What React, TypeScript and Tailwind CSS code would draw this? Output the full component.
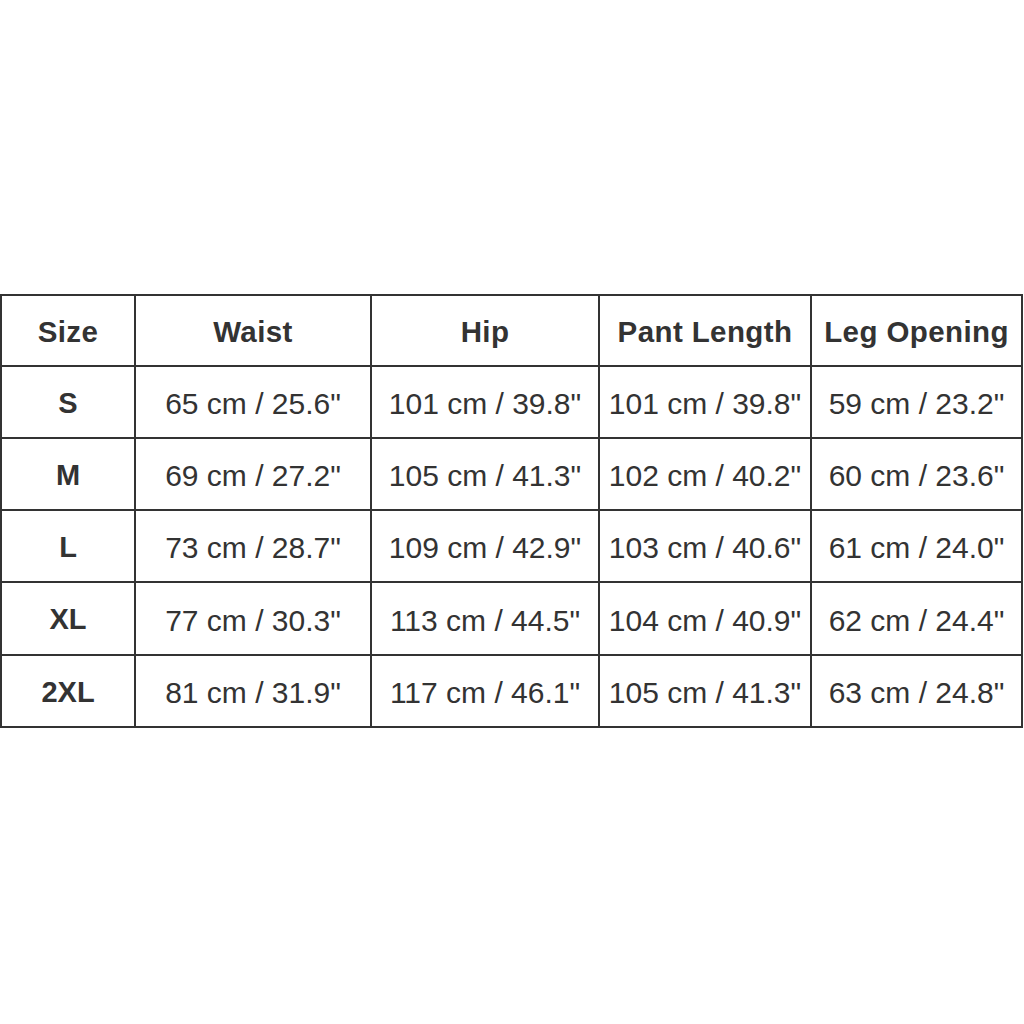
const headers = ['Size', 'Waist', 'Hip', 'Pant Length', 'Leg Opening']

const rows = [
  ['S', '65 cm / 25.6"', '101 cm / 39.8"', '101 cm / 39.8"', '59 cm / 23.2"'],
  ['M', '69 cm / 27.2"', '105 cm / 41.3"', '102 cm / 40.2"', '60 cm / 23.6"'],
  ['L', '73 cm / 28.7"', '109 cm / 42.9"', '103 cm / 40.6"', '61 cm / 24.0"'],
  ['XL', '77 cm / 30.3"', '113 cm / 44.5"', '104 cm / 40.9"', '62 cm / 24.4"'],
  ['2XL', '81 cm / 31.9"', '117 cm / 46.1"', '105 cm / 41.3"', '63 cm / 24.8"'],
]

export default function App() {
  return (
    <div className="w-[1024px] h-[1024px] bg-white pt-[294px] font-['Liberation_Sans',Arial,sans-serif] text-[#333]">
      {/* Size chart */}
      <div className="w-[1023px] grid grid-cols-[132px_234px_226px_210px_209px] grid-rows-[69px_70px_70px_70px_71px_70px] gap-[2px] p-[2px] bg-[#333]">
        {headers.map(h => (
          <div key={h} className="bg-white flex items-center justify-center pt-[3px] text-[29.5px] font-bold tracking-[0.4px] whitespace-nowrap">
            {h}
          </div>
        ))}
        {rows.map(r =>
          r.map((cell, i) => (
            <div key={r[0] + i}
              className={
                i === 0
                  ? 'bg-white flex items-center justify-center pt-[3px] text-[29px] font-bold whitespace-nowrap'
                  : 'bg-white flex items-center justify-center pt-[3px] text-[30px] whitespace-nowrap'
              }>
              {cell}
            </div>
          ))
        )}
      </div>
    </div>
  )
}
